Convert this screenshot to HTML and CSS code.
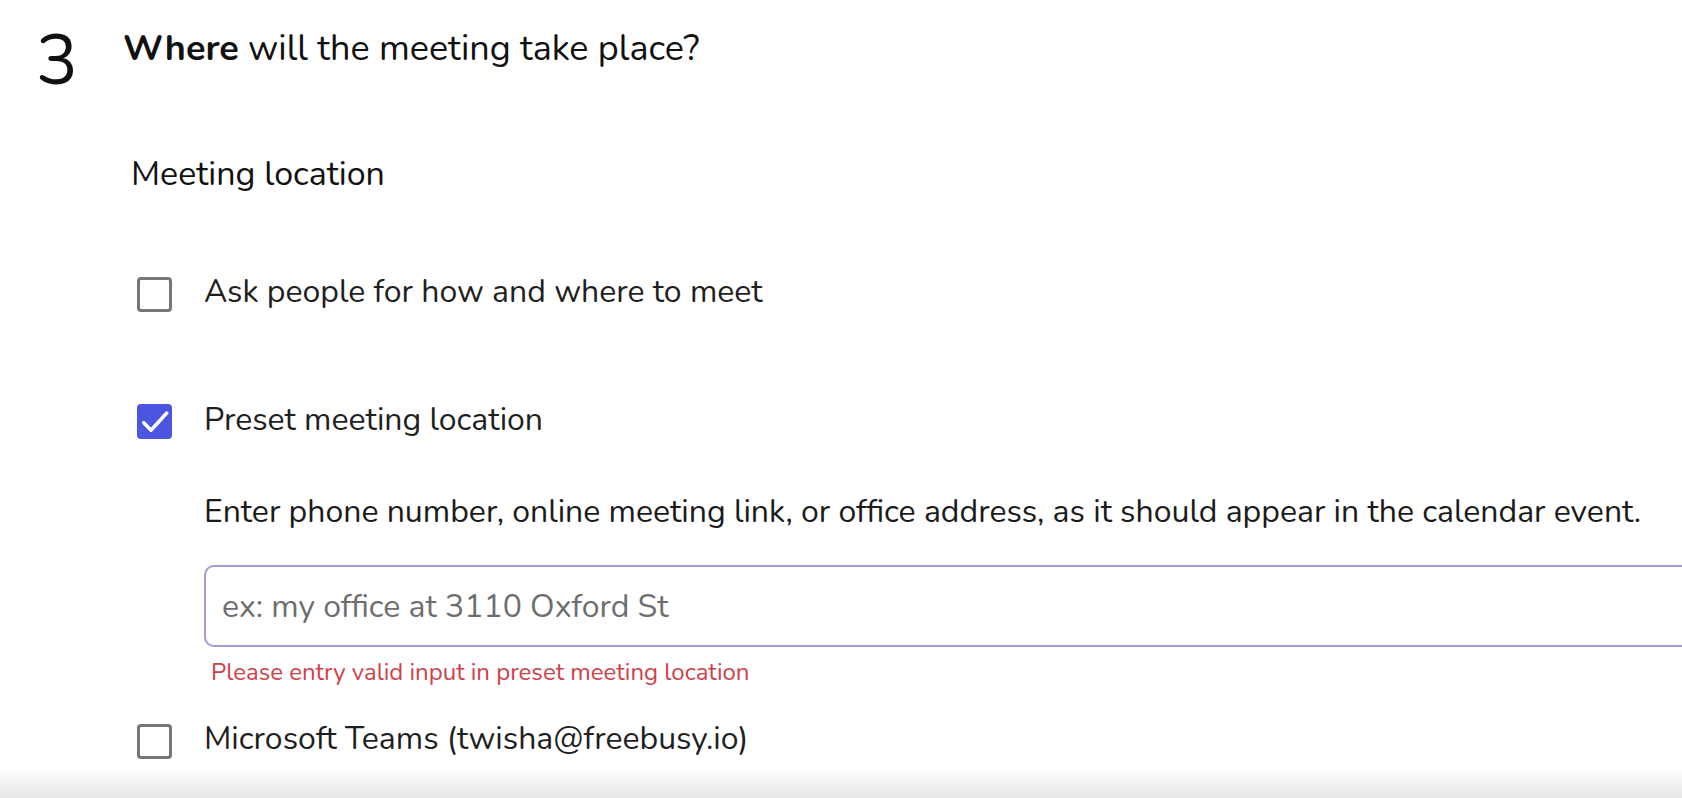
FILE: index.html
```html
<!DOCTYPE html>
<html lang="en">
<head>
<meta charset="utf-8">
<title>Where will the meeting take place?</title>
<link rel="stylesheet" href="styles.css">
</head>
<body>
<div class="page">
  <section class="step">
    <div class="step-num">3</div>
    <div class="step-body">
      <h2 class="step-title"><strong>Where</strong> will the meeting take place?</h2>
      <div class="field-label">Meeting location</div>

      <label class="option option-first">
        <span class="checkbox"></span>
        <span class="option-text">Ask people for how and where to meet</span>
      </label>

      <label class="option option-second">
        <span class="checkbox checked">
          <svg viewBox="0 0 24 24" width="35" height="35" aria-hidden="true"><path d="M4.6 12.8l5 5.2L20.4 6.2" fill="none" stroke="#fff" stroke-width="2.4" stroke-linecap="round" stroke-linejoin="round"/></svg>
        </span>
        <span class="option-text">Preset meeting location</span>
      </label>

      <div class="preset">
        <p class="hint">Enter phone number, online meeting link, or office address, as it should appear in the calendar event.</p>
        <input class="text-input" type="text" placeholder="ex: my office at 3110 Oxford St">
        <div class="error">Please entry valid input in preset meeting location</div>
      </div>

      <label class="option option-third">
        <span class="checkbox"></span>
        <span class="option-text">Microsoft Teams (twisha@freebusy.io)</span>
      </label>
    </div>
  </section>
  <div class="fade"></div>
</div>
</body>
</html>
```

FILE: styles.css
```css
html, body {
  margin: 0;
  padding: 0;
  background: #ffffff;
}

body {
  font-family: "Nunito", "Lato", "Noto Sans", sans-serif;
  color: #1b1b1b;
  overflow: hidden;
}

.page {
  height: 100vh;
  display: flex;
  flex-direction: column;
  overflow: hidden;
}

.step {
  display: flex;
  flex: 1;
  min-height: 0;
}

.step-num {
  width: 87px;
  padding-left: 36px;
  padding-top: 21px;
  font-size: 70px;
  line-height: 80px;
  font-weight: 400;
  color: #111;
  flex-shrink: 0;
}

.step-body {
  flex: 1;
  min-width: 0;
  padding-top: 27px;
}

.step-title {
  margin: 0;
  font-size: 36px;
  line-height: 44px;
  font-weight: 400;
  color: #111;
}

.step-title strong {
  font-weight: 700;
}

.field-label {
  margin-top: 81px;
  padding-left: 8px;
  font-size: 34px;
  line-height: 44px;
  color: #111;
}

.option {
  display: flex;
  align-items: flex-start;
  gap: 32px;
  padding-left: 14px;
  font-size: 32px;
  line-height: 40px;
  color: #1f1f1f;
}

.option .checkbox {
  margin-top: 5px;
}

.option-first {
  margin-top: 76px;
}

.option-second {
  margin-top: 88px;
}

.option-second .checkbox {
  margin-top: 4px;
}

.option-third {
  margin-top: 32px;
}

.checkbox {
  width: 35px;
  height: 35px;
  box-sizing: border-box;
  border: 3px solid #767676;
  border-radius: 4px;
  flex-shrink: 0;
  display: flex;
  align-items: center;
  justify-content: center;
  background: #fff;
}

.checkbox.checked {
  border: none;
  background: #4b55df;
}

.preset {
  padding-left: 81px;
  margin-top: 52px;
}

.hint {
  margin: 0;
  font-size: 32px;
  line-height: 40px;
  color: #1b1b1b;
  white-space: nowrap;
}

.text-input {
  display: block;
  box-sizing: border-box;
  width: calc(100% + 40px);
  height: 82px;
  margin-top: 33px;
  padding: 0 16px;
  border: 2px solid #a09fd2;
  border-radius: 10px;
  font-family: inherit;
  font-size: 32px;
  color: #333;
  background: #fff;
  outline: none;
}

.text-input::placeholder {
  color: #6e6e6e;
}

.error {
  margin-top: 10px;
  padding-left: 7px;
  font-size: 24px;
  line-height: 30px;
  color: #d0404a;
}

.fade {
  height: 31px;
  flex-shrink: 0;
  background: linear-gradient(to bottom, #ffffff, #e6e6e6);
}
```
